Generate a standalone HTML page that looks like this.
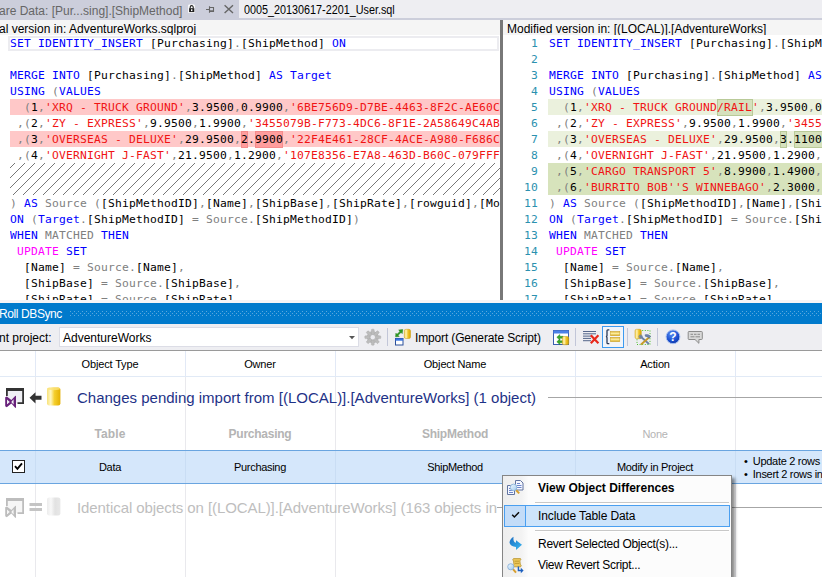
<!DOCTYPE html>
<html><head><meta charset="utf-8"><title>ReadyRoll DBSync</title>
<style>
*{box-sizing:border-box;margin:0;padding:0}
html,body{width:822px;height:577px;overflow:hidden;background:#fff}
body{position:relative;font-family:"Liberation Sans",sans-serif;font-size:12px;color:#000}
.abs{position:absolute}
i{font-style:normal}
/* tabs */
#tabs{position:absolute;left:0;top:0;width:822px;height:20px;background:#eeeef2;border-bottom:2px solid #ccceDB}
#tab1{position:absolute;left:0;top:0;width:239px;height:20px;background:#ccceDB}
.t{position:absolute;white-space:nowrap;line-height:16px}
/* panes */
#lhead{position:absolute;left:0;top:20px;width:500px;height:15px;background:#f5f5f5}
#rhead{position:absolute;left:503px;top:20px;width:319px;height:15px;background:#f5f5f5}
#split{position:absolute;left:500px;top:20px;width:3px;height:280px;background:#787878}
#left{position:absolute;left:0;top:35px;width:500px;height:265px;overflow:hidden;background:#fff}
#right{position:absolute;left:503px;top:35px;width:319px;height:265px;overflow:hidden;background:#fff}
.code{font-family:"DejaVu Sans Mono","Liberation Mono",monospace;font-size:11.3px;letter-spacing:0.197px}
.ln{position:absolute;left:10px;right:0;height:16px;line-height:17px;white-space:pre;overflow:hidden}
#right .ln{left:45px;padding-left:1px}
#hatch{position:absolute;left:10px;top:128px;width:490px;height:32px;overflow:hidden}
#hatch div{position:absolute;left:-3.8px;top:0;width:500px;height:32px;background:repeating-linear-gradient(135deg,transparent 0,transparent 5.77px,#777 5.77px,#777 7.07px)}
.num{position:absolute;left:0;width:35px;text-align:right;height:16px;line-height:17px;overflow:hidden;color:#2b91af}
.b{color:#0000ff}.g{color:#808080}.m{color:#ff00ff}.s{color:#f01414}
.red{background:#ffc8c8}
.grn1{background:#ebf1dd}
.grn2{background:#d7e3bc}
.hl{position:absolute;height:17px}
.bg{position:absolute;left:10px;right:0;height:16px}
#right .bg{left:45px}
.hr{background:#ff9d9d;border:1px solid #f58c8c}
.hg{background:#d6e1bd;border:1px solid #b9ca98}

/* lower panel */
#title{position:absolute;left:0;top:303px;width:822px;height:21px;background:#007acc}
#grip{position:absolute;left:70px;top:8px;right:0;height:5px;
 background-image:radial-gradient(circle at 0.5px 0.5px,#59a8de 0.6px,transparent 0.7px),radial-gradient(circle at 0.5px 0.5px,#59a8de 0.6px,transparent 0.7px);
 background-size:4px 4px,4px 4px;background-position:0 0,2px 2px}
#tb{position:absolute;left:0;top:324px;width:822px;height:27px;background:#eeeef2;border-bottom:1px solid #9a9a9a}
#combo{position:absolute;left:59px;top:3px;width:300px;height:20px;background:#fff;border:1px solid #dcdde6}
#grid{position:absolute;left:0;top:351px;width:822px;height:226px;background:#fff;overflow:hidden}
.vl{position:absolute;top:0;width:1px;height:226px;background:#e9e9ed}
.hd{position:absolute;top:5px;height:16px;line-height:16px;font-size:11px;letter-spacing:-0.15px;text-align:center;white-space:nowrap}
.c1{left:35px;width:150px}.c2{left:185px;width:150px}.c3{left:335px;width:240px}.c4{left:575px;width:160px}
.cell{position:absolute;height:16px;line-height:16px;font-size:11px;letter-spacing:-0.3px;text-align:center;white-space:nowrap}
.dim{color:#b4b4b4}
.grp{position:absolute;left:77px;height:20px;line-height:20px;font-size:15px;white-space:nowrap}
#sel{position:absolute;left:0;top:99px;width:822px;height:34px;background:#d5e7fb;border-top:1px solid #6aa5e0;border-bottom:1px solid #6aa5e0}
#cb{position:absolute;left:12px;top:109px;width:13px;height:13px;background:#fff;border:1px solid #222}
/* menu */
#menu{position:absolute;left:502px;top:475px;width:230px;height:110px;background:#fcfcfc;border:1px solid #858585;box-shadow:3px 3px 3px rgba(0,0,0,.45)}
.mi{position:absolute;left:35px;height:16px;line-height:16px;white-space:nowrap;font-size:12px}
.sep{position:absolute;left:32px;right:2px;height:1px;background:#c8c8c8;border-bottom:1px solid #fff;box-sizing:content-box}
#mhl{position:absolute;left:1px;top:29px;width:226px;height:22px;background:#cde4fb;border:1px solid #4a9ff0}
#mck{position:absolute;left:1px;top:29px;width:22px;height:22px;background:#c3dcf8;border:1px solid #4a9ff0}
#mgut{position:absolute;left:0;top:0;width:25px;height:108px;background:linear-gradient(90deg,#eeeeee,#f3f3f3 75%,#fbfbfb)}
</style></head><body>
<div id="tabs"><div id="tab1"></div>
<svg class="abs" style="left:186px;top:3px" width="52" height="12" viewBox="0 0 52 12">
<rect x="2.2" y="1.6" width="6.6" height="8.5" rx="1.2" fill="#fff"/>
<path d="M4.2 5.4V4.1a1.5 1.5 0 0 1 3 0V5.4" fill="none" stroke="#1e1e1e" stroke-width="1.1"/>
<rect x="3.1" y="5.2" width="5.2" height="3.9" fill="#1e1e1e"/><rect x="5" y="6.3" width="1.4" height="1.8" fill="#fff"/>
<path d="M20 6.5h3.5M23.5 3.3v6.4M23.5 4.5h4v4h-4" fill="none" stroke="#666" stroke-width="1.1"/><rect x="23.5" y="7.3" width="4.5" height="1.7" fill="#666"/>
<path d="M38.6 2.2l8.4 7.8M47 2.2l-8.4 7.8" fill="none" stroke="#666" stroke-width="1.4"/>
</svg>
<div class="t" style="left:-1px;top:3px;color:#666">are Data: [Pur...sing].[ShipMethod]</div>
<div class="t" style="left:244px;top:2px;transform:scaleX(0.9);transform-origin:0 0">0005_20130617-2201_User.sql</div>
</div>
<div id="lhead"><div class="t" style="left:-1px;top:1px">al version in: AdventureWorks.sqlproj</div></div>
<div id="rhead"><div class="t" style="left:4px;top:1px">Modified version in: [(LOCAL)].[AdventureWorks]</div></div>
<div id="left" class="code">
<div class="abs" style="left:8px;top:1px;width:491px;height:15px;border:2px solid #ececf0"></div>
<div class="bg red" style="top:64px"></div>
<div class="bg red" style="top:96px"></div>
<div class="hl hr" style="left:241px;top:96px;width:7px"></div><div class="hl hr" style="left:255px;top:96px;width:28px"></div>
<div class="ln" style="top:0px"><i class="b">SET</i> <i class="b">IDENTITY_INSERT</i> [Purchasing]<i class="g">.</i>[ShipMethod] <i class="b">ON</i></div>
<div class="ln" style="top:16px"></div>
<div class="ln" style="top:32px"><i class="b">MERGE</i> <i class="b">INTO</i> [Purchasing]<i class="g">.</i>[ShipMethod] <i class="b">AS</i> <i class="b">Target</i></div>
<div class="ln" style="top:48px"><i class="b">USING</i> <i class="g">(</i><i class="b">VALUES</i></div>
<div class="ln" style="top:64px">  <i class="g">(</i>1<i class="g">,</i><i class="s">'XRQ - TRUCK GROUND'</i><i class="g">,</i>3.9500<i class="g">,</i>0.9900<i class="g">,</i><i class="s">'6BE756D9-D7BE-4463-8F2C-AE60C</i></div>
<div class="ln" style="top:80px"> <i class="g">,</i><i class="g">(</i>2<i class="g">,</i><i class="s">'ZY - EXPRESS'</i><i class="g">,</i>9.9500<i class="g">,</i>1.9900<i class="g">,</i><i class="s">'3455079B-F773-4DC6-8F1E-2A58649C4AB</i></div>
<div class="ln" style="top:96px"> <i class="g">,</i><i class="g">(</i>3<i class="g">,</i><i class="s">'OVERSEAS - DELUXE'</i><i class="g">,</i>29.9500<i class="g">,</i>2.9900<i class="g">,</i><i class="s">'22F4E461-28CF-4ACE-A980-F686C</i></div>
<div class="ln" style="top:112px"> <i class="g">,</i><i class="g">(</i>4<i class="g">,</i><i class="s">'OVERNIGHT J-FAST'</i><i class="g">,</i>21.9500<i class="g">,</i>1.2900<i class="g">,</i><i class="s">'107E8356-E7A8-463D-B60C-079FFF</i></div>
<div class="ln" style="top:160px"><i class="g">)</i> <i class="b">AS</i> <i class="g">Source</i> <i class="g">(</i>[ShipMethodID]<i class="g">,</i>[Name]<i class="g">,</i>[ShipBase]<i class="g">,</i>[ShipRate]<i class="g">,</i>[rowguid]<i class="g">,</i>[Mo</div>
<div class="ln" style="top:176px"><i class="b">ON</i> <i class="g">(</i><i class="b">Target</i><i class="g">.</i>[ShipMethodID] <i class="g">=</i> <i class="g">Source</i><i class="g">.</i>[ShipMethodID]<i class="g">)</i></div>
<div class="ln" style="top:192px"><i class="b">WHEN</i> <i class="g">MATCHED</i> <i class="b">THEN</i></div>
<div class="ln" style="top:208px"> <i class="m">UPDATE</i> <i class="b">SET</i></div>
<div class="ln" style="top:224px">  [Name] <i class="g">=</i> <i class="g">Source</i><i class="g">.</i>[Name]<i class="g">,</i></div>
<div class="ln" style="top:240px">  [ShipBase] <i class="g">=</i> <i class="g">Source</i><i class="g">.</i>[ShipBase]<i class="g">,</i></div>
<div class="ln" style="top:256px">  [ShipRate] <i class="g">=</i> <i class="g">Source</i><i class="g">.</i>[ShipRate]</div>
<div id="hatch"><div></div></div>
</div>
<div id="split"></div>
<div id="right" class="code">
<div class="bg grn1" style="top:64px"></div>
<div class="bg grn1" style="top:96px"></div>
<div class="bg grn2" style="top:128px"></div>
<div class="bg grn2" style="top:144px"></div>
<div class="hl hg" style="left:213.5px;top:63.5px;width:36px"></div><div class="hl hg" style="left:276.5px;top:95.5px;width:7.5px"></div><div class="hl hg" style="left:290.5px;top:95.5px;width:32px"></div>
<div class="num" style="top:0px">1</div><div class="ln" style="top:0px"><i class="b">SET</i> <i class="b">IDENTITY_INSERT</i> [Purchasing]<i class="g">.</i>[ShipMethod] <i class="b">ON</i></div>
<div class="num" style="top:16px">2</div><div class="ln" style="top:16px"></div>
<div class="num" style="top:32px">3</div><div class="ln" style="top:32px"><i class="b">MERGE</i> <i class="b">INTO</i> [Purchasing]<i class="g">.</i>[ShipMethod] <i class="b">AS</i> <i class="b">Target</i></div>
<div class="num" style="top:48px">4</div><div class="ln" style="top:48px"><i class="b">USING</i> <i class="g">(</i><i class="b">VALUES</i></div>
<div class="num" style="top:64px">5</div><div class="ln" style="top:64px">  <i class="g">(</i>1<i class="g">,</i><i class="s">'XRQ - TRUCK GROUND/RAIL'</i><i class="g">,</i>3.9500<i class="g">,</i>0.9900<i class="g">,</i><i class="s">'6BE756D9</i></div>
<div class="num" style="top:80px">6</div><div class="ln" style="top:80px"> <i class="g">,</i><i class="g">(</i>2<i class="g">,</i><i class="s">'ZY - EXPRESS'</i><i class="g">,</i>9.9500<i class="g">,</i>1.9900<i class="g">,</i><i class="s">'3455079B-F773</i></div>
<div class="num" style="top:96px">7</div><div class="ln" style="top:96px"> <i class="g">,</i><i class="g">(</i>3<i class="g">,</i><i class="s">'OVERSEAS - DELUXE'</i><i class="g">,</i>29.9500<i class="g">,</i>3.1100<i class="g">,</i><i class="s">'22F4E461</i></div>
<div class="num" style="top:112px">8</div><div class="ln" style="top:112px"> <i class="g">,</i><i class="g">(</i>4<i class="g">,</i><i class="s">'OVERNIGHT J-FAST'</i><i class="g">,</i>21.9500<i class="g">,</i>1.2900<i class="g">,</i><i class="s">'107E8356</i></div>
<div class="num" style="top:128px">9</div><div class="ln" style="top:128px"> <i class="g">,</i><i class="g">(</i>5<i class="g">,</i><i class="s">'CARGO TRANSPORT 5'</i><i class="g">,</i>8.9900<i class="g">,</i>1.4900<i class="g">,</i><i class="s">'A7C3F1E2</i></div>
<div class="num" style="top:144px">10</div><div class="ln" style="top:144px"> <i class="g">,</i><i class="g">(</i>6<i class="g">,</i><i class="s">'BURRITO BOB''S WINNEBAGO'</i><i class="g">,</i>2.3000<i class="g">,</i>1.1000<i class="g">,</i><i class="s">'B</i></div>
<div class="num" style="top:160px">11</div><div class="ln" style="top:160px"><i class="g">)</i> <i class="b">AS</i> <i class="g">Source</i> <i class="g">(</i>[ShipMethodID]<i class="g">,</i>[Name]<i class="g">,</i>[ShipBase]<i class="g">,</i>[ShipRate]</div>
<div class="num" style="top:176px">12</div><div class="ln" style="top:176px"><i class="b">ON</i> <i class="g">(</i><i class="b">Target</i><i class="g">.</i>[ShipMethodID] <i class="g">=</i> <i class="g">Source</i><i class="g">.</i>[ShipMethodID]<i class="g">)</i></div>
<div class="num" style="top:192px">13</div><div class="ln" style="top:192px"><i class="b">WHEN</i> <i class="g">MATCHED</i> <i class="b">THEN</i></div>
<div class="num" style="top:208px">14</div><div class="ln" style="top:208px"> <i class="m">UPDATE</i> <i class="b">SET</i></div>
<div class="num" style="top:224px">15</div><div class="ln" style="top:224px">  [Name] <i class="g">=</i> <i class="g">Source</i><i class="g">.</i>[Name]<i class="g">,</i></div>
<div class="num" style="top:240px">16</div><div class="ln" style="top:240px">  [ShipBase] <i class="g">=</i> <i class="g">Source</i><i class="g">.</i>[ShipBase]<i class="g">,</i></div>
<div class="num" style="top:256px">17</div><div class="ln" style="top:256px">  [ShipRate] <i class="g">=</i> <i class="g">Source</i><i class="g">.</i>[ShipRate]</div>
</div>

<div class="abs" style="left:0;top:300px;width:822px;height:3px;background:#f5f4f6"></div>
<div id="title"><div class="t" style="left:-1px;top:3px;color:#fff;letter-spacing:-0.4px">Roll DBSync</div><div id="grip"></div></div>
<div id="tb">
<div class="t" style="left:-1px;top:6px">nt project:</div>
<div id="combo"><div class="t" style="left:3px;top:2px">AdventureWorks</div></div>
<div class="t" style="left:415px;top:6px;letter-spacing:-0.15px">Import (Generate Script)</div>
</div>
<svg class="abs" style="left:0;top:324px" width="822" height="26" viewBox="0 324 822 26">
<defs>
<linearGradient id="gold" x1="0" x2="1" y1="0" y2="0"><stop offset="0" stop-color="#f3d35a"/><stop offset="0.3" stop-color="#fff2b0"/><stop offset="0.6" stop-color="#f0c428"/><stop offset="1" stop-color="#d9a400"/></linearGradient>
<linearGradient id="goldv" x1="0" x2="0" y1="0" y2="1"><stop offset="0" stop-color="#e0b030"/><stop offset="0.45" stop-color="#fdf0a0"/><stop offset="1" stop-color="#d8a820"/></linearGradient>
<radialGradient id="hb" cx="0.4" cy="0.3" r="0.8"><stop offset="0" stop-color="#5a8cf0"/><stop offset="0.6" stop-color="#1a4fd0"/><stop offset="1" stop-color="#0a2f9a"/></radialGradient>
</defs>
<!-- combo arrow -->
<path d="M349 336h6l-3 3.2z" fill="#555"/>
<!-- gear -->
<g transform="translate(372.8 337.2)" fill="#bcbcbc" stroke="#a8a8a8" stroke-width="0.4">
<circle r="5.6" fill="#c4c4c4" stroke="#a6a6a6" stroke-width="0.6"/>
<g id="teeth"><rect x="-1.4" y="-8" width="2.8" height="16" rx="0.7"/><rect x="-8" y="-1.4" width="16" height="2.8" rx="0.7"/></g>
<use href="#teeth" transform="rotate(45)"/>
<circle r="2.7" fill="#ececf0" stroke="#a4a4a4" stroke-width="0.6"/>
</g>
<!-- separators -->
<g fill="#c2c6d8"><rect x="387" y="328" width="1" height="18"/><rect x="575" y="328" width="1" height="18"/><rect x="627" y="328" width="1" height="18"/><rect x="657" y="328" width="1" height="18"/></g>
<!-- import icon -->
<path d="M395.6 336.8l0.3-3.6 1.1 1.1 3-2.9-1.3-1.3 4-0.5-0.5 4-1.2-1.2-3 2.9 1.2 1.2z" fill="#2f9e20" stroke="#1a7412" stroke-width="0.5"/>
<rect x="395.5" y="338.5" width="7.5" height="6.5" fill="#fff" stroke="#2a4f9a" stroke-width="1"/><rect x="395.5" y="338.5" width="7.5" height="2.2" fill="#3a74e0"/>
<rect x="404.3" y="329.3" width="6.2" height="9.2" rx="1.6" fill="url(#gold)" stroke="#c89a10" stroke-width="0.5"/>
<!-- refresh window icon -->
<rect x="553.5" y="330.5" width="15" height="14" fill="#fff" stroke="#3a5fb0" stroke-width="1"/><rect x="553.5" y="330.5" width="15" height="3" fill="#4a80e8"/>
<path d="M556.8 337.3l3-2.8v1.8h3.4v2h-3.4v1.8zM556.8 341.8l3-2.8v1.8h3.4v2h-3.4v1.8z" fill="#3aa828" stroke="#1c7a14" stroke-width="0.4"/>
<rect x="562.3" y="336.5" width="6.4" height="8.2" rx="1.5" fill="url(#gold)" stroke="#c89a10" stroke-width="0.5"/>
<!-- lines + red x -->
<g fill="#55668a"><rect x="583" y="331" width="13" height="1"/><rect x="583" y="333.3" width="13" height="1"/><rect x="583" y="335.6" width="9" height="1"/><rect x="583" y="337.9" width="8" height="1"/><rect x="583" y="340.2" width="8" height="1"/></g>
<path d="M590.8 335.2l7.6 8M598.4 335.2l-7.6 8" stroke="#e8281c" stroke-width="2.2" fill="none"/>
<!-- active button -->
<rect x="602.5" y="326.5" width="21" height="21" fill="#f2f5fa" stroke="#3c9af0" stroke-width="1"/>
<path d="M609.3 329.8h-1.4q-0.9 0-0.9 0.9v4.9l-0.5 1 0.5 1v5.1q0 0.9 0.9 0.9h1.4" fill="none" stroke="#2a3a5a" stroke-width="1.3"/>
<rect x="610.3" y="331.5" width="9.5" height="4.2" fill="url(#goldv)" stroke="#c8a020" stroke-width="0.5"/>
<rect x="610.3" y="337.4" width="9.5" height="4.2" fill="url(#goldv)" stroke="#c8a020" stroke-width="0.5"/>
<!-- db tools icon -->
<rect x="637" y="330.5" width="13" height="14" fill="none" stroke="#4cc028" stroke-width="1" stroke-dasharray="1 1.6"/>
<rect x="635" y="329.3" width="6.3" height="9.4" rx="1.6" fill="url(#gold)" stroke="#c89a10" stroke-width="0.5"/>
<path d="M640 336l9 8" stroke="#6a80a8" stroke-width="1.8" fill="none"/><circle cx="640.6" cy="336.6" r="1.6" fill="none" stroke="#6a80a8" stroke-width="1"/>
<path d="M649.5 337l-8.5 7.5" stroke="#c89a28" stroke-width="1.8" fill="none"/><path d="M645 334.8q3.5-1.2 5.8 1.8l-1.8 1.6q-1.5-2-3.5-1.8z" fill="#7088b0" stroke="#4a5f88" stroke-width="0.5"/>
<!-- help -->
<circle cx="673" cy="336.8" r="6.9" fill="url(#hb)" stroke="#a8c0f0" stroke-width="1"/>
<text x="673" y="341.2" text-anchor="middle" font-family="Liberation Sans,sans-serif" font-weight="bold" font-size="12" fill="#fff">?</text>
<!-- comment -->
<path d="M689 331.5h12.5q0.8 0 0.8 0.8v6.4q0 0.8-0.8 0.8h-2.6v3.8l-3.9-3.8h-6q-0.8 0-0.8-0.8v-6.4q0-0.8 0.8-0.8z" fill="#d9d9d9" stroke="#8a8a8a" stroke-width="1"/>
<path d="M690.5 334.3h2.5M694 334.3h2.5M697.5 334.3h2.5M690.5 336.8h4M695.5 336.8h4.5" stroke="#8a8a8a" stroke-width="1"/>
</svg>
<div id="grid">
<div class="vl" style="left:35px"></div><div class="vl" style="left:185px"></div><div class="vl" style="left:335px"></div><div class="vl" style="left:575px"></div><div class="vl" style="left:735px"></div>
<div class="vl" style="left:35px;height:25px;background:#e2e9f6"></div><div class="vl" style="left:185px;height:25px;background:#e2e9f6"></div><div class="vl" style="left:335px;height:25px;background:#e2e9f6"></div><div class="vl" style="left:575px;height:25px;background:#e2e9f6"></div><div class="vl" style="left:735px;height:25px;background:#e2e9f6"></div>
<div class="abs" style="left:0;top:25px;width:822px;height:1px;background:#e1eaf6"></div>
<div class="hd c1">Object Type</div><div class="hd c2">Owner</div><div class="hd c3">Object Name</div><div class="hd c4">Action</div>
<svg width="0" height="0" style="position:absolute"><defs>
<linearGradient id="gold2" x1="0" x2="1" y1="0" y2="0"><stop offset="0" stop-color="#f8e27a"/><stop offset="0.28" stop-color="#fff6c0"/><stop offset="0.55" stop-color="#f5cf2e"/><stop offset="1" stop-color="#e4b000"/></linearGradient>
<linearGradient id="ghostg" x1="0" x2="1" y1="0" y2="0"><stop offset="0" stop-color="#ececec"/><stop offset="0.3" stop-color="#f8f8f8"/><stop offset="0.6" stop-color="#e2e2e2"/><stop offset="1" stop-color="#e8e8e8"/></linearGradient>
</defs></svg><svg class="abs" style="left:0;top:35px" width="66" height="24" viewBox="0 386 66 24">
<rect x="7" y="390" width="16" height="13" fill="#efeff4"/>
<path d="M6 388h18v16h-6.5v-1.8h4.7v-11.2h-14.4v5h-1.8z" fill="#333"/>
<path d="M5.2 397.3l1.6-0.9 4.6 3.6 4-4.3 0.6 0.3v11.6l-0.6 0.3-4-4.3-4.6 3.6-1.6-0.9zM7 399.5v4.8l2.8-2.4zM13.6 399.3l-2.4 2.6 2.4 2.6z" fill="#68217a" fill-rule="evenodd"/>
<path d="M29.5 397.8l6-5.6v3.6h6v4h-6v3.6z" fill="#333"/>
<rect x="47" y="387.4" width="13.4" height="18" rx="2.2" fill="url(#gold2)"/><ellipse cx="53.7" cy="388.8" rx="6.6" ry="1.5" fill="#fbe27a" opacity="0.8"/>
</svg><svg class="abs" style="left:0;top:145px" width="66" height="24" viewBox="0 496 66 24">
<rect x="7" y="500" width="16" height="13" fill="#f6f6f6"/>
<path d="M6 498h18v16h-6.5v-1.8h4.7v-11.2h-14.4v5h-1.8z" fill="#bdbdbd"/>
<path d="M5.2 507.3l1.6-0.9 4.6 3.6 4-4.3 0.6 0.3v11.6l-0.6 0.3-4-4.3-4.6 3.6-1.6-0.9zM7 509.5v4.8l2.8-2.4zM13.6 509.3l-2.4 2.6 2.4 2.6z" fill="#bdbdbd" fill-rule="evenodd"/>
<rect x="29.5" y="503" width="12.5" height="3" fill="#c4c4c4"/><rect x="29.5" y="508" width="12.5" height="3" fill="#c4c4c4"/>
<rect x="47" y="497.4" width="13.4" height="18" rx="2.2" fill="url(#ghostg)"/>
</svg>
<div class="grp" style="top:37px;color:#1e3287">Changes pending import from [(LOCAL)].[AdventureWorks] (1 object)</div>
<div class="abs" style="left:548px;top:46px;width:274px;height:1px;background:#a6a6a6"></div>
<div class="cell c1 dim" style="top:75px;font-weight:bold;font-size:12px;letter-spacing:0.1px">Table</div><div class="cell c2 dim" style="top:75px;font-weight:bold;font-size:12px;letter-spacing:-0.25px">Purchasing</div><div class="cell c3 dim" style="top:75px;font-weight:bold;font-size:12px;letter-spacing:-0.25px">ShipMethod</div><div class="cell c4 dim" style="top:75px">None</div>
<div id="sel"></div>
<div class="vl" style="left:35px;top:100px;height:32px;background:#c9ddf4"></div><div class="vl" style="left:185px;top:100px;height:32px;background:#c9ddf4"></div><div class="vl" style="left:335px;top:100px;height:32px;background:#c9ddf4"></div><div class="vl" style="left:575px;top:100px;height:32px;background:#c9ddf4"></div><div class="vl" style="left:735px;top:100px;height:32px;background:#c9ddf4"></div>
<div id="cb"><svg class="abs" style="left:0;top:0" width="11" height="11" viewBox="0 0 11 11"><path d="M2 5.2l2.4 2.6 4.6-5.4" fill="none" stroke="#000" stroke-width="1.9"/></svg></div>
<div class="cell c1" style="top:108px">Data</div><div class="cell c2" style="top:108px">Purchasing</div><div class="cell c3" style="top:108px">ShipMethod</div><div class="cell c4" style="top:108px">Modify in Project</div>
<div class="cell" style="left:744px;top:102px;text-align:left">&bull;<i style="margin-left:2.5px"> Update 2 rows</i></div>
<div class="cell" style="left:744px;top:115px;text-align:left">&bull;<i style="margin-left:2.5px"> Insert 2 rows in</i></div>
<div class="grp" style="top:147px;color:#bebebe;letter-spacing:-0.08px">Identical objects on [(LOCAL)].[AdventureWorks] (163 objects in</div>
<div class="abs" style="left:497px;top:156px;width:325px;height:1px;background:#a6a6a6"></div>
</div>
<div id="menu">
<div id="mgut"></div><div id="mhl"></div><div id="mck"></div>
<svg class="abs" style="left:0;top:0" width="30" height="102" viewBox="503 476 30 102">
<defs><linearGradient id="lens" x1="0" x2="1" y1="0" y2="1"><stop offset="0" stop-color="#f4fbff"/><stop offset="1" stop-color="#9cc8ee"/></linearGradient>
<linearGradient id="bl" x1="0" x2="1" y1="0" y2="1"><stop offset="0" stop-color="#1c6cc0"/><stop offset="0.6" stop-color="#2a9ce0"/><stop offset="1" stop-color="#48b8f0"/></linearGradient></defs>
<!-- docs + magnifier -->
<path d="M515.5 480.5h5l2.5 2.5v7h-7.5z" fill="#f6f8ff" stroke="#6274a0" stroke-width="1"/>
<path d="M517 483.5h3M517 485.5h4.5M517 487.5h4.5" stroke="#6c86cc" stroke-width="1"/>
<path d="M507.5 485.5h5l2 2v7h-7z" fill="#f6f8ff" stroke="#6274a0" stroke-width="1"/>
<path d="M509 488.5h3M509 490.5h4M509 492.5h4" stroke="#6c86cc" stroke-width="1"/>
<path d="M516 490l3.2 3.4" stroke="#d8a030" stroke-width="2"/>
<circle cx="513.6" cy="487.4" r="3.3" fill="url(#lens)" stroke="#8ab0d8" stroke-width="0.9"/>
<!-- check -->
<path d="M512.2 514.7l2.2 2.3 4.6-4.7" fill="none" stroke="#0a0a0a" stroke-width="1.5"/>
<!-- blue revert arrow -->
<path d="M513.5 536.8q-3.8 2.4-4 6 1.2 4 6.5 4.2v3l6-5.2-6-4.6v2.6q-3.2-0.6-2.5-6z" fill="url(#bl)"/>
<!-- script + magnifier + arrow -->
<path d="M513.5 558.6h7q1 1.2-0.6 2.2l0.4 3.4q1.6 1 0.4 2.6h-7q-1.4-1 0.2-2.4l-0.4-3.4q-1.6-1.2 0-2.4z" fill="#ecc85a" stroke="#b08a20" stroke-width="0.7"/>
<path d="M514.5 561.2h4.5M514.8 563.4h4.5" stroke="#b08a20" stroke-width="0.7"/>
<path d="M513 569.2l3 3.4" stroke="#d8a030" stroke-width="2"/>
<circle cx="510.8" cy="566.8" r="3.1" fill="url(#lens)" stroke="#8ab0d8" stroke-width="0.9"/>
<path d="M518.4 566.5v4h3" fill="none" stroke="#1c60c0" stroke-width="1.4"/><path d="M520.8 567.8l2.8 2.7-2.8 2.7z" fill="#1c60c0"/>
</svg>
<div class="mi" style="top:4px;font-weight:bold">View Object Differences</div>
<div class="sep" style="top:26px"></div>
<div class="mi" style="top:32px;letter-spacing:-0.1px">Include Table Data</div>
<div class="sep" style="top:54px"></div>
<div class="mi" style="top:60px;letter-spacing:-0.27px">Revert Selected Object(s)...</div>
<div class="mi" style="top:81px;letter-spacing:-0.29px">View Revert Script...</div>
</div>
</body></html>
